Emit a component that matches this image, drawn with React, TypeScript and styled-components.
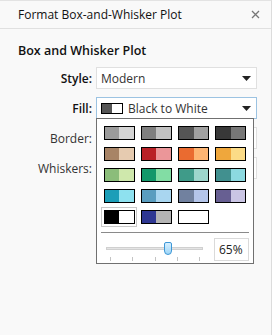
import React from 'react';
import styled, { createGlobalStyle } from 'styled-components';

const GlobalStyle = createGlobalStyle`
  body {
    margin: 0;
    background: #ffffff;
    font-family: "Open Sans", "Liberation Sans", sans-serif;
  }
`;

type Swatch = { left: string; right: string; selected?: boolean };

const palettes: Swatch[] = [
  { left: '#9b9b9b', right: '#d4d4d4' },
  { left: '#7f7f7f', right: '#c1c1c1' },
  { left: '#555555', right: '#a0a0a0' },
  { left: '#383838', right: '#777777' },
  { left: '#a88466', right: '#e6cbb0' },
  { left: '#b92026', right: '#eb9699' },
  { left: '#ea6b30', right: '#fdb573' },
  { left: '#efa73c', right: '#fbdb87' },
  { left: '#8bbd7a', right: '#cfe8ac' },
  { left: '#12986a', right: '#82dda4' },
  { left: '#3f9b89', right: '#9dd6cc' },
  { left: '#41908f', right: '#8cd9e0' },
  { left: '#1c9eb8', right: '#8ee1ef' },
  { left: '#5a9dbf', right: '#a9d6f0' },
  { left: '#71819f', right: '#b4c5ea' },
  { left: '#675f92', right: '#cac5e4' },
  { left: '#000000', right: '#ffffff', selected: true },
  { left: '#2e3792', right: '#b4b4b4' },
  { left: '#ffffff', right: '#ffffff' },
];

const ticks = [0, 1, 2, 3, 4];

const Caret = () => (
  <svg width="9" height="5" viewBox="0 0 9 5">
    <path d="M0 0 L9 0 L4.5 5 Z" fill="#222" />
  </svg>
);

const App: React.FC = () => {
  return (
    <Panel>
      <GlobalStyle />
      <Header>
        <HeaderTitle>Format Box-and-Whisker Plot</HeaderTitle>
        <CloseIcon viewBox="0 0 9 9">
          <path d="M1 1 L8 8 M8 1 L1 8" stroke="#777" strokeWidth="1.3" />
        </CloseIcon>
      </Header>

      <SectionTitle>Box and Whisker Plot</SectionTitle>

      <Form>
        <Row>
          <Label $bold>Style:</Label>
          <Select>
            <SelectText>Modern</SelectText>
            <Caret />
          </Select>
        </Row>
        <Row>
          <Label $bold>Fill:</Label>
          <Select $focused>
            <MiniSwatch $left="#555555" $right="#ffffff" />
            <SelectText>Black to White</SelectText>
            <Caret />
          </Select>
          <Popup>
            <SwatchGrid>
              {palettes.map((p, i) => (
                <SwatchCell key={i} $selected={p.selected}>
                  <SwatchBox $left={p.left} $right={p.right} />
                </SwatchCell>
              ))}
            </SwatchGrid>
            <Divider />
            <SliderRow>
              <Slider>
                <Track />
                <Thumb />
                <Ticks>
                  {ticks.map(t => (
                    <Tick key={t} />
                  ))}
                </Ticks>
              </Slider>
              <Percent>65%</Percent>
            </SliderRow>
          </Popup>
        </Row>
        <Row>
          <Label>Border:</Label>
          <Select />
        </Row>
        <Row>
          <Label>Whiskers:</Label>
          <Select />
        </Row>
      </Form>
    </Panel>
  );
};

export default App;

const Panel = styled.div`
  width: 271px;
  height: 334px;
  background: #f9f9f9;
  border-top: 1px solid #e3e3e3;
  border-right: 1px solid #dcdcdc;
  color: #1a1a1a;
`;

const Header = styled.div`
  height: 27px;
  display: flex;
  align-items: center;
  justify-content: space-between;
  padding: 0 11px 0 18px;
  border-bottom: 1px solid #e0e0e0;
`;

const HeaderTitle = styled.div`
  font-size: 12px;
  color: #111;
`;

const CloseIcon = styled.svg`
  width: 9px;
  height: 9px;
`;

const SectionTitle = styled.div`
  font-size: 12.5px;
  font-weight: 600;
  padding: 13px 0 0 18px;
  height: 25px;
  color: #111;
`;

const Form = styled.div`
  display: flex;
  flex-direction: column;
  gap: 8px;
`;

const Row = styled.div`
  position: relative;
  display: flex;
  align-items: center;
  gap: 4px;
  height: 22px;
`;

const Label = styled.div<{ $bold?: boolean }>`
  width: 92px;
  text-align: right;
  font-size: 12px;
  font-weight: ${p => (p.$bold ? 600 : 400)};
  color: ${p => (p.$bold ? '#111' : '#333')};
`;

const Select = styled.div<{ $focused?: boolean }>`
  box-sizing: border-box;
  width: 161px;
  height: 22px;
  display: flex;
  align-items: center;
  gap: 5px;
  padding: 0 5px 0 4px;
  background: #fff;
  border: 1px solid ${p => (p.$focused ? '#9cc3e2' : '#e0e0e0')};
`;

const SelectText = styled.div`
  flex: 1;
  font-size: 12px;
  color: #333;
`;

const MiniSwatch = styled.div<{ $left: string; $right: string }>`
  box-sizing: border-box;
  width: 22px;
  height: 11px;
  border: 1px solid #000;
  background: linear-gradient(to right, ${p => p.$left} 50%, ${p => p.$right} 50%);
`;

const Popup = styled.div`
  position: absolute;
  left: 96px;
  top: 21px;
  box-sizing: border-box;
  width: 158px;
  height: 146px;
  background: #fff;
  border: 1px solid #707070;
  padding: 4px 4px 0 4px;
  z-index: 2;
`;

const SwatchGrid = styled.div`
  display: grid;
  grid-template-columns: repeat(4, 37px);
  grid-auto-rows: 21px;
`;

const SwatchCell = styled.div<{ $selected?: boolean }>`
  box-sizing: border-box;
  width: 36px;
  height: 20px;
  display: flex;
  align-items: center;
  justify-content: center;
  border: 1px solid ${p => (p.$selected ? '#c8c8c8' : 'transparent')};
`;

const SwatchBox = styled.div<{ $left: string; $right: string }>`
  box-sizing: border-box;
  width: 31px;
  height: 14px;
  border: 1px solid #000;
  background: linear-gradient(to right, ${p => p.$left} 50%, ${p => p.$right} 50%);
`;

const Divider = styled.div`
  height: 1px;
  background: #8a8a8a;
  margin: 4px 0 0 0;
  width: 148px;
`;

const SliderRow = styled.div`
  display: flex;
  align-items: center;
  justify-content: space-between;
  padding: 5px 0 0 5px;
`;

const Slider = styled.div`
  position: relative;
  width: 97px;
  height: 22px;
`;

const Track = styled.div`
  position: absolute;
  left: 0;
  right: 0;
  top: 8px;
  height: 3px;
  background: #e4e4e4;
  border: 1px solid #d0d0d0;
  box-sizing: border-box;
`;

const Thumb = styled.div`
  position: absolute;
  left: 58px;
  top: 3px;
  width: 8px;
  height: 13px;
  box-sizing: border-box;
  background: linear-gradient(#d6efff, #9fd6f7);
  border: 1px solid #3d97d6;
  border-radius: 2px 2px 4px 4px;
`;

const Ticks = styled.div`
  position: absolute;
  left: 4px;
  right: 3px;
  top: 18px;
  display: flex;
  justify-content: space-between;
`;

const Tick = styled.div`
  width: 1px;
  height: 4px;
  background: #c4c4c4;
`;

const Percent = styled.div`
  box-sizing: border-box;
  width: 35px;
  height: 23px;
  border: 1px solid #dadada;
  font-size: 12px;
  display: flex;
  align-items: center;
  padding-left: 4px;
  color: #222;
`;
